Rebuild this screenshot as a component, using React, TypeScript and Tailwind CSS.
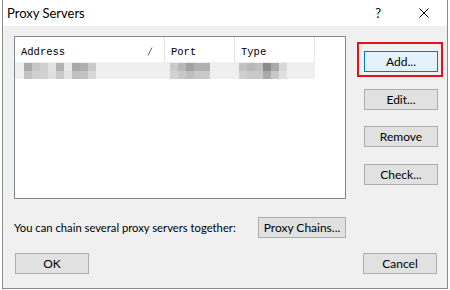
import React from "react";

type Cell = [string, string];

const addrCells: Cell[] = [
  ["bg-[#a9a9a9]", "bg-[#c2c2c2]"],
  ["bg-[#c6c6c6]", "bg-[#d0d0d0]"],
  ["bg-[#cfcfcf]", "bg-[#d2d2d2]"],
  ["bg-[#e2e2e2]", "bg-[#dfdfdf]"],
  ["bg-[#b2b2b2]", "bg-[#c8c8c8]"],
  ["bg-[#e8e8e8]", "bg-[#e2e2e2]"],
  ["bg-[#a9a9a9]", "bg-[#c0c0c0]"],
  ["bg-[#b0b0b0]", "bg-[#c2c2c2]"],
  ["bg-[#cacaca]", "bg-[#d8d8d8]"],
];

const portCells: Cell[] = [
  ["bg-[#cacaca]", "bg-[#d2d2d2]"],
  ["bg-[#b8b8b8]", "bg-[#c8c8c8]"],
  ["bg-[#a2a2a2]", "bg-[#bfbfbf]"],
  ["bg-[#b0b0b0]", "bg-[#c8c8c8]"],
  ["bg-[#b0b0b0]", "bg-[#c9c9c9]"],
];

const typeCells: Cell[] = [
  ["bg-[#c2c2c2]", "bg-[#d0d0d0]"],
  ["bg-[#b8b8b8]", "bg-[#c8c8c8]"],
  ["bg-[#c0c0c0]", "bg-[#c9c9c9]"],
  ["bg-[#8a8a8a]", "bg-[#a9a9a9]"],
  ["bg-[#a9a9a9]", "bg-[#c8c8c8]"],
  ["bg-[#d8d8d8]", "bg-[#e0e0e0]"],
];

function Blob({ cells }: { cells: Cell[] }) {
  return (
    <div className="flex">
      {cells.map((c, i) => (
        <div key={i} className="flex flex-col w-[8px]">
          <div className={`h-[8px] ${c[0]}`} />
          <div className={`h-[8px] ${c[1]}`} />
        </div>
      ))}
    </div>
  );
}

function Btn({
  children,
  className = "",
}: {
  children: React.ReactNode;
  className?: string;
}) {
  return (
    <div
      className={`flex shrink-0 items-center justify-center h-[21px] border text-[12px] leading-none text-black whitespace-nowrap ${className}`}
    >
      {children}
    </div>
  );
}

export default function App() {
  return (
    <div className="w-[450px] h-[290px] bg-white overflow-hidden font-['Lato',sans-serif] text-black">
      <div className="ml-[2px] w-[446px] h-[289px] border-x border-b border-[#8c8c8c] flex flex-col">
        {/* title bar */}
        <div className="h-[26px] bg-white flex items-center shrink-0">
          <span className="pl-[4px] text-[13px] leading-none">Proxy Servers</span>
          <span className="ml-auto mr-[38px] text-[13px] leading-none">?</span>
          <svg width="10" height="10" viewBox="0 0 10 10" className="mr-[18px]">
            <path d="M0.5 0.5 L9.5 9.5 M9.5 0.5 L0.5 9.5" stroke="#000" strokeWidth="1" />
          </svg>
        </div>
        {/* body */}
        <div className="flex-1 bg-[#f0f0f0] flex flex-col">
          <div className="flex pt-[10px] pl-[11px]">
            {/* list */}
            <div className="w-[332px] h-[163px] border border-[#828790] bg-white flex flex-col">
              <div className="flex h-[25px] font-['Liberation_Mono',monospace] text-[10.5px] leading-none">
                <div className="w-[150px] border-r border-[#e5e5e5] flex items-center pl-[6px] relative">
                  <span className="pt-[5px]">Address</span>
                  <svg width="6" height="9" viewBox="0 0 6 9" className="absolute left-[132px] top-[10px]">
                    <path d="M5 0.5 L1 8.5" stroke="#6a6a6a" strokeWidth="1" />
                  </svg>
                </div>
                <div className="w-[70px] border-r border-[#e5e5e5] flex items-center pl-[6px]">
                  <span className="pt-[5px]">Port</span>
                </div>
                <div className="w-[80px] border-r border-[#e5e5e5] flex items-center pl-[6px]">
                  <span className="pt-[5px]">Type</span>
                </div>
              </div>
              <div className="flex h-[17px] w-[300px] bg-[#efefef] items-center">
                <div className="w-[150px] pl-[9px]">
                  <Blob cells={addrCells} />
                </div>
                <div className="w-[70px] pl-[5px]">
                  <Blob cells={portCells} />
                </div>
                <div className="w-[80px] pl-[4px]">
                  <Blob cells={typeCells} />
                </div>
              </div>
            </div>
            {/* right buttons */}
            <div className="flex flex-col ml-[18px]">
              <div className="relative mt-[15px]">
                <Btn className="w-[74px] bg-[#e5f1fb] border-[#0078d7]">Add...</Btn>
                <div className="absolute left-[-7px] top-[-9px] w-[86px] h-[35px] border-2 border-[#e3111b]" />
              </div>
              <Btn className="w-[74px] mt-[17px] bg-[#e1e1e1] border-[#adadad]">Edit...</Btn>
              <Btn className="w-[74px] mt-[16px] bg-[#e1e1e1] border-[#adadad]">Remove</Btn>
              <Btn className="w-[74px] mt-[17px] bg-[#e1e1e1] border-[#adadad]">Check...</Btn>
            </div>
          </div>
          {/* chain row */}
          <div className="flex items-center justify-between w-[343px] pl-[11px] mt-[18px]">
            <span className="text-[11.25px] leading-none whitespace-nowrap">
              You can chain several proxy servers together:
            </span>
            <Btn className="w-[88px] bg-[#e1e1e1] border-[#adadad]">Proxy Chains...</Btn>
          </div>
          {/* bottom buttons */}
          <div className="flex justify-between pl-[12px] w-[434px] mt-[15px]">
            <Btn className="w-[74px] bg-[#e1e1e1] border-[#adadad]">OK</Btn>
            <Btn className="w-[74px] bg-[#e1e1e1] border-[#adadad]">Cancel</Btn>
          </div>
        </div>
      </div>
    </div>
  );
}
